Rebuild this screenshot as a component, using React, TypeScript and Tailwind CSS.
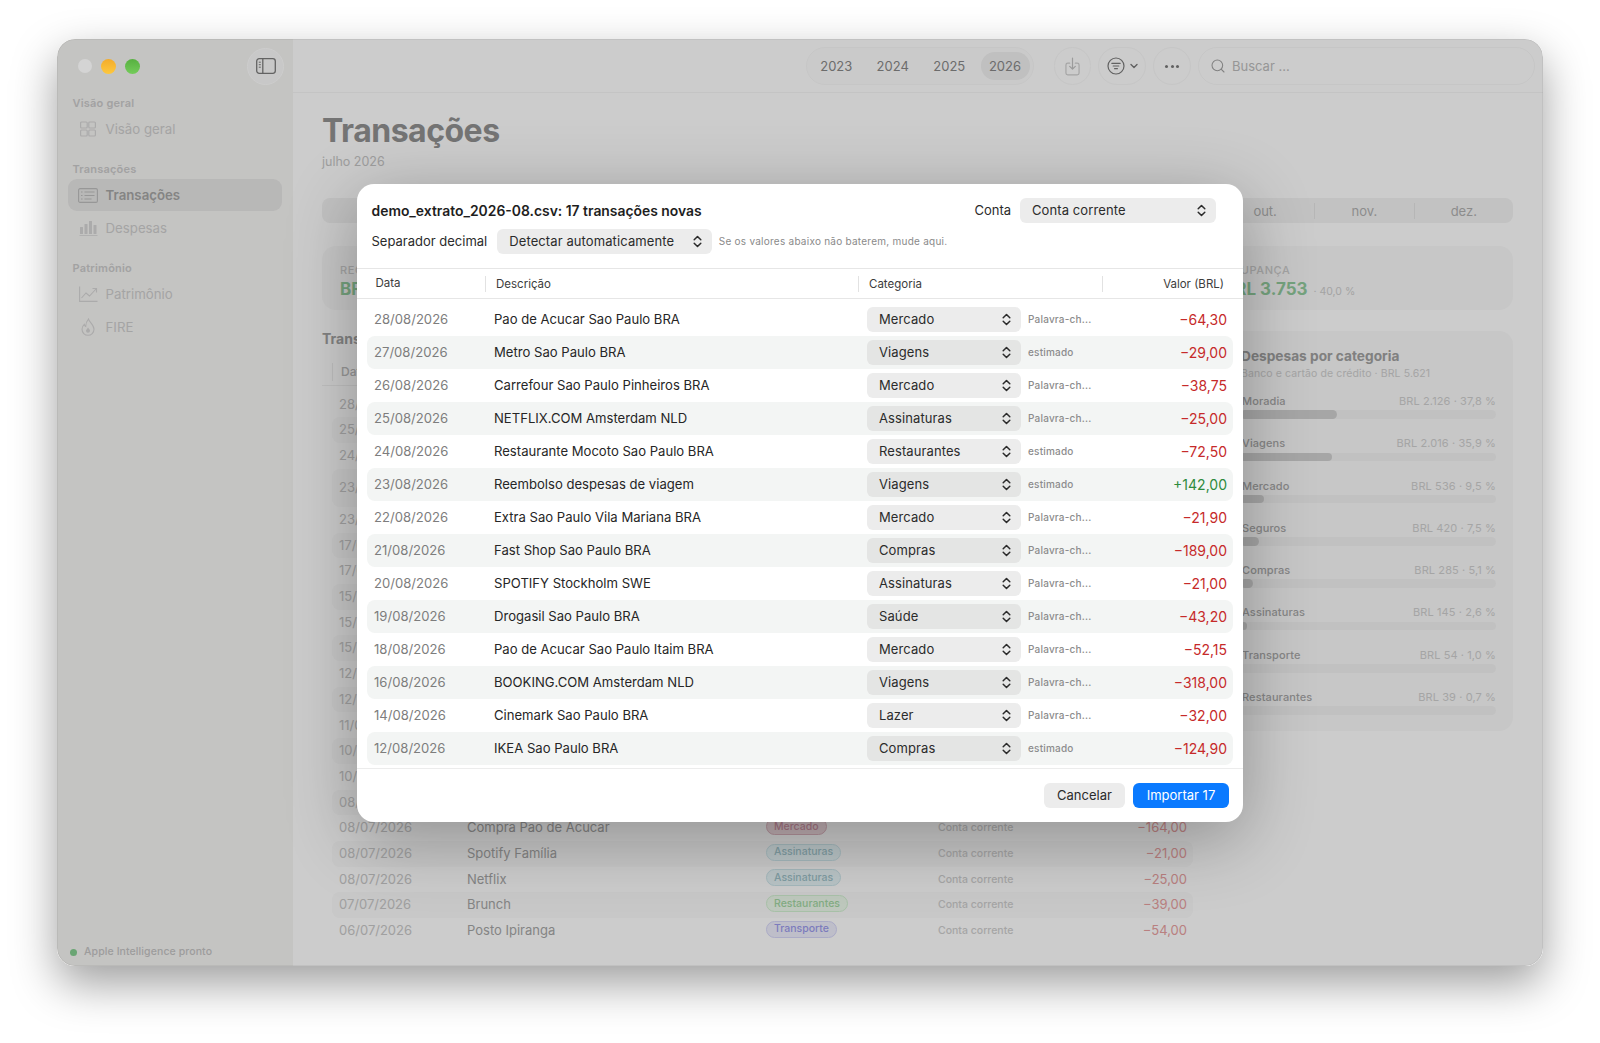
import { Search } from 'lucide-react';

const importRows = [
  { date: '28/08/2026', desc: 'Pao de Acucar Sao Paulo BRA', cat: 'Mercado', how: 'Palavra-ch...', value: '−64,30' },
  { date: '27/08/2026', desc: 'Metro Sao Paulo BRA', cat: 'Viagens', how: 'estimado', value: '−29,00' },
  { date: '26/08/2026', desc: 'Carrefour Sao Paulo Pinheiros BRA', cat: 'Mercado', how: 'Palavra-ch...', value: '−38,75' },
  { date: '25/08/2026', desc: 'NETFLIX.COM Amsterdam NLD', cat: 'Assinaturas', how: 'Palavra-ch...', value: '−25,00' },
  { date: '24/08/2026', desc: 'Restaurante Mocoto Sao Paulo BRA', cat: 'Restaurantes', how: 'estimado', value: '−72,50' },
  { date: '23/08/2026', desc: 'Reembolso despesas de viagem', cat: 'Viagens', how: 'estimado', value: '+142,00' },
  { date: '22/08/2026', desc: 'Extra Sao Paulo Vila Mariana BRA', cat: 'Mercado', how: 'Palavra-ch...', value: '−21,90' },
  { date: '21/08/2026', desc: 'Fast Shop Sao Paulo BRA', cat: 'Compras', how: 'Palavra-ch...', value: '−189,00' },
  { date: '20/08/2026', desc: 'SPOTIFY Stockholm SWE', cat: 'Assinaturas', how: 'Palavra-ch...', value: '−21,00' },
  { date: '19/08/2026', desc: 'Drogasil Sao Paulo BRA', cat: 'Saúde', how: 'Palavra-ch...', value: '−43,20' },
  { date: '18/08/2026', desc: 'Pao de Acucar Sao Paulo Itaim BRA', cat: 'Mercado', how: 'Palavra-ch...', value: '−52,15' },
  { date: '16/08/2026', desc: 'BOOKING.COM Amsterdam NLD', cat: 'Viagens', how: 'Palavra-ch...', value: '−318,00' },
  { date: '14/08/2026', desc: 'Cinemark Sao Paulo BRA', cat: 'Lazer', how: 'Palavra-ch...', value: '−32,00' },
  { date: '12/08/2026', desc: 'IKEA Sao Paulo BRA', cat: 'Compras', how: 'estimado', value: '−124,90' },
];

const hiddenDates = [
  '28/07/2026', '25/07/2026', '24/07/2026', '23/07/2026', '23/07/2026', '17/07/2026', '17/07/2026', '15/07/2026',
  '15/07/2026', '15/07/2026', '12/07/2026', '12/07/2026', '11/07/2026', '10/07/2026', '10/07/2026', '08/07/2026',
];

const badgeStyles: Record<string, string> = {
  Mercado: 'bg-[#f1dbe0] border-[#e0b8c2] text-[#d094a6]',
  Assinaturas: 'bg-[#e8f6f8] border-[#cde6ec] text-[#a0c4cb]',
  Restaurantes: 'bg-[#eefaed] border-[#d2f2d2] text-[#a4d8a4]',
  Transporte: 'bg-[#eeeefc] border-[#d6d6f8] text-[#9c9cec]',
};

const lastRows = [
  { date: '08/07/2026', desc: 'Compra Pao de Acucar', cat: 'Mercado', value: '−164,00' },
  { date: '08/07/2026', desc: 'Spotify Família', cat: 'Assinaturas', value: '−21,00' },
  { date: '08/07/2026', desc: 'Netflix', cat: 'Assinaturas', value: '−25,00' },
  { date: '07/07/2026', desc: 'Brunch', cat: 'Restaurantes', value: '−39,00' },
  { date: '06/07/2026', desc: 'Posto Ipiranga', cat: 'Transporte', value: '−54,00' },
];

const categories = [
  { name: 'Moradia', info: 'BRL 2.126 · 37,8 %', pct: 37.8 },
  { name: 'Viagens', info: 'BRL 2.016 · 35,9 %', pct: 35.9 },
  { name: 'Mercado', info: 'BRL 536 · 9,5 %', pct: 9.5 },
  { name: 'Seguros', info: 'BRL 420 · 7,5 %', pct: 7.5 },
  { name: 'Compras', info: 'BRL 285 · 5,1 %', pct: 5.1 },
  { name: 'Assinaturas', info: 'BRL 145 · 2,6 %', pct: 2.6 },
  { name: 'Transporte', info: 'BRL 54 · 1,0 %', pct: 1.0 },
  { name: 'Restaurantes', info: 'BRL 39 · 0,7 %', pct: 0.7 },
];

const months = ['jan.', 'fev.', 'mar.', 'abr.', 'mai.', 'jun.', 'jul.', 'ago.', 'set.', 'out.', 'nov.', 'dez.'];

function UpDown() {
  return (
    <svg width="9" height="13" viewBox="0 0 9 13" fill="none" stroke="#2b2b2b" strokeWidth="1.5" strokeLinecap="round" strokeLinejoin="round">
      <path d="M1.2 4.8 4.5 1.5 7.8 4.8" />
      <path d="M1.2 8.2 4.5 11.5 7.8 8.2" />
    </svg>
  );
}

function GridIcon() {
  return (
    <svg width="18" height="16" viewBox="0 0 18 16" fill="none" stroke="#d6d6d6" strokeWidth="1.2">
      <rect x="1.6" y="1" width="6.6" height="6" rx="1" />
      <rect x="9.8" y="1" width="6.6" height="6" rx="1" />
      <rect x="1.6" y="9" width="6.6" height="6" rx="1" />
      <rect x="9.8" y="9" width="6.6" height="6" rx="1" />
    </svg>
  );
}

function ListIcon() {
  return (
    <svg width="20" height="15" viewBox="0 0 20 15" fill="none" stroke="#bdbdbd" strokeWidth="1.1">
      <rect x="0.6" y="0.6" width="18.8" height="13.8" rx="1.5" />
      <path d="M3 4h1.5M3 7.5h1.5M3 11h1.5M6.5 4h10M6.5 7.5h10M6.5 11h7" />
    </svg>
  );
}

function BarsIcon() {
  return (
    <svg width="19" height="16" viewBox="0 0 19 16" fill="#d6d6d6">
      <rect x="1" y="7" width="3" height="7" rx="0.5" />
      <rect x="5.5" y="4" width="3" height="10" rx="0.5" />
      <rect x="10" y="1" width="3" height="13" rx="0.5" />
      <rect x="14.5" y="5" width="3" height="9" rx="0.5" />
      <rect x="0.5" y="15" width="18" height="0.8" />
    </svg>
  );
}

function TrendIcon() {
  return (
    <svg width="19" height="16" viewBox="0 0 19 16" fill="none" stroke="#d6d6d6" strokeWidth="1.1">
      <path d="M0.6 0.5V15.4H18.5" />
      <path d="M2.5 12 7 7l3.5 3 6.5-7" />
      <path d="M13.5 2.5h4v4" />
    </svg>
  );
}

function FlameIcon() {
  return (
    <svg width="18" height="18" viewBox="0 0 18 18" fill="none" stroke="#d6d6d6" strokeWidth="1.1">
      <path d="M9.5 1c.4 3 5.5 5.2 5.5 10.3A6 6 0 0 1 3 11.3C3 9 4.2 7.4 5.3 6.4c.2 1 .7 1.6 1.4 2C6.7 5.4 7.8 3 9.5 1z" />
      <path fill="#d6d6d6" stroke="none" d="M9 9.5c.4 1 2 1.7 2 3.3a2 2 0 0 1-4 0c0-1.2 1.5-2.1 2-3.3z" />
    </svg>
  );
}

function SidebarToggleIcon() {
  return (
    <svg width="20" height="16" viewBox="0 0 20 16" fill="none" stroke="#7c7c7c" strokeWidth="1.3">
      <rect x="0.7" y="0.7" width="18.6" height="14.6" rx="2.5" />
      <path d="M6.8 0.7v14.6" />
      <path d="M2.8 4.2h2M2.8 6.7h2M2.8 9.2h2" strokeWidth="1" />
    </svg>
  );
}

function ImportIcon() {
  return (
    <svg width="15" height="19" viewBox="0 0 16 20" fill="none" stroke="#cfcfcf" strokeWidth="1.3" strokeLinecap="round" strokeLinejoin="round">
      <path d="M5 6.5H3a2 2 0 0 0-2 2V17a2 2 0 0 0 2 2h10a2 2 0 0 0 2-2V8.5a2 2 0 0 0-2-2h-2" />
      <path d="M8 1v11.5M5 9.8l3 3 3-3" stroke="#c2c2c2" />
    </svg>
  );
}

function FilterIcon() {
  return (
    <svg width="18" height="18" viewBox="0 0 18 18" fill="none" stroke="#7a7a7a" strokeWidth="1.2" strokeLinecap="round">
      <circle cx="9" cy="9" r="8" />
      <path d="M4.8 6.3h8.4M6.2 9h5.6M7.6 11.7h2.8" />
    </svg>
  );
}

function SmallChevron() {
  return (
    <svg width="8" height="6" viewBox="0 0 8 6" fill="none" stroke="#7a7a7a" strokeWidth="1.4" strokeLinecap="round" strokeLinejoin="round">
      <path d="M1 1.5 4 4.5 7 1.5" />
    </svg>
  );
}

function SideLabel({ children }: { children: string }) {
  return <p className="mt-[17px] pl-[15.5px] text-[11px] leading-[14px] font-semibold tracking-[0.2px] text-[#cbcbcb]">{children}</p>;
}

function SideItem({ icon, label, active }: { icon: React.ReactNode; label: string; active?: boolean }) {
  return (
    <div className={`mx-[11px] flex h-[32px] items-center gap-[7.5px] rounded-[9px] pl-[10px] text-[13.25px] ${active ? 'bg-[#e6e6e5] font-semibold text-[#a6a6a6]' : 'text-[#cecece]'}`}>
      <span className="flex w-[20px] justify-center">{icon}</span>
      <span className="pt-[2px]">{label}</span>
    </div>
  );
}

function Sidebar() {
  return (
    <aside className="flex h-full w-[236px] shrink-0 flex-col bg-[#f6f5f3]">
      <div className="flex h-[54px] shrink-0 items-center justify-between pl-[21px] pr-[9px]">
        <div className="relative z-20 flex items-center gap-[9px]">
          <span className="h-[14px] w-[14px] rounded-full bg-[#d4d4d4]" />
          <span className="h-[15px] w-[15px] rounded-full bg-linear-to-b from-[#f3ac2a] to-[#fdc83e]" />
          <span className="h-[15px] w-[15px] rounded-full bg-linear-to-b from-[#57b040] to-[#74cc5a]" />
        </div>
        <button className="flex h-[37px] w-[37px] items-center justify-center rounded-full border border-white bg-[#fbfbfa]">
          <SidebarToggleIcon />
        </button>
      </div>
      <p className="mt-[3px] pl-[15.5px] text-[11px] leading-[14px] font-semibold tracking-[0.2px] text-[#cbcbcb]">Visão geral</p>
      <div className="mt-[3px]">
        <SideItem icon={<GridIcon />} label="Visão geral" />
      </div>
      <SideLabel>Transações</SideLabel>
      <div className="mt-[3px] flex flex-col gap-px">
        <SideItem icon={<ListIcon />} label="Transações" active />
        <SideItem icon={<BarsIcon />} label="Despesas" />
      </div>
      <SideLabel>Patrimônio</SideLabel>
      <div className="mt-[3px] flex flex-col gap-px">
        <SideItem icon={<TrendIcon />} label="Patrimônio" />
        <SideItem icon={<FlameIcon />} label="FIRE" />
      </div>
      <div className="mt-auto flex items-center gap-[7px] pb-[7px] pl-[13px]">
        <span className="h-[7px] w-[7px] rounded-full bg-[#85cf91]" />
        <span className="text-[10.5px] leading-[14px] font-medium tracking-[0.1px] text-[#c4c4c4]">Apple Intelligence pronto</span>
      </div>
    </aside>
  );
}

function Toolbar() {
  return (
    <header className="flex h-[54px] shrink-0 items-center border-b border-[#f6f6f6] pl-[513px] pr-[8px] pt-[1px]">
      <div className="flex h-[38px] w-[228px] items-center rounded-full border border-[#f8f8f8] bg-[#fdfdfd] pl-[1px] text-[13px] text-[#888888]">
        {['2023', '2024', '2025'].map((y) => (
          <span key={y} className="w-[56.5px] pt-[2px] text-center">{y}</span>
        ))}
        <span className="ml-[3px] flex h-[28px] w-[49px] items-center justify-center rounded-full bg-[#f0f0f0] pt-[2px]">2026</span>
      </div>
      <button className="ml-[20px] flex h-[38px] w-[37px] items-center justify-center rounded-full border border-[#f8f8f8]">
        <ImportIcon />
      </button>
      <button className="ml-[7px] flex h-[38px] w-[48px] items-center justify-center gap-[5px] rounded-full border border-[#f8f8f8]">
        <FilterIcon />
        <SmallChevron />
      </button>
      <button className="ml-[7px] flex h-[38px] w-[38px] items-center justify-center gap-[2.5px] rounded-full border border-[#f8f8f8]">
        <span className="h-[3px] w-[3px] rounded-full bg-[#7a7a7a]" />
        <span className="h-[3px] w-[3px] rounded-full bg-[#7a7a7a]" />
        <span className="h-[3px] w-[3px] rounded-full bg-[#7a7a7a]" />
      </button>
      <div className="ml-[7px] flex h-[38px] flex-1 items-center gap-[6px] rounded-full border border-[#f8f8f8] pl-[11px] text-[13px] text-[#bcbcbc]">
        <Search size={16} strokeWidth={1.6} className="text-[#a3a3a3]" />
        <span className="pt-[2px]">Buscar ...</span>
      </div>
    </header>
  );
}

function BackgroundTable() {
  return (
    <div className="w-[883px]">
      <h2 className="text-[14px] leading-[16px] font-bold text-[#a3a3a3]">Transações</h2>
      <div className="mt-[11px] flex h-[28px] items-center border-b border-[#f0f0f0] pl-[10px] text-[12px] font-medium text-[#bdbdbd]">
        <span className="border-l border-[#eeeeee] pl-[8px]">Data</span>
      </div>
      <div className="mt-[5.5px] h-[548px] overflow-hidden pl-[10px]">
        {hiddenDates.map((d, i) => (
          <div key={i} className={`flex w-[861px] items-center rounded-[8px] pl-[7px] text-[13px] text-[#c8c8c8] ${i === 3 ? 'h-[38.4px]' : 'h-[25.7px]'} ${i % 2 === 1 ? 'bg-[#fafafa]' : ''}`}>
            {d}
          </div>
        ))}
        {lastRows.map((r, i) => (
          <div key={i} className={`flex h-[25.7px] w-[861px] items-center rounded-[8px] pl-[7px] pr-[6px] text-[13px] ${i % 2 === 1 ? 'bg-[#fafafa]' : ''}`}>
            <span className="w-[128px] text-[#c8c8c8]">{r.date}</span>
            <span className="w-[299px] text-[#a6a6a6]">{r.desc}</span>
            <span className="-mt-[3px] flex w-[172px]">
              <span className={`inline-flex h-[17px] items-center rounded-full border px-[7px] text-[10.5px] font-medium ${badgeStyles[r.cat]}`}>{r.cat}</span>
            </span>
            <span className="text-[10.5px] font-medium text-[#cfcfcf]">Conta corrente</span>
            <span className="flex-1 text-right text-[#e8a0a0]">{r.value}</span>
          </div>
        ))}
      </div>
    </div>
  );
}

function CategoryCard() {
  return (
    <section className="h-[400px] w-[289px] rounded-[14px] bg-[#f9f9f9] pl-[17px] pr-[17px] pt-[16px]">
      <h3 className="text-[13.7px] leading-[18px] font-bold text-[#a0a0a0]">Despesas por categoria</h3>
      <p className="mt-[2px] text-[10.5px] leading-[14px] tracking-[0.1px] text-[#cecece]">Banco e cartão de crédito · BRL 5.621</p>
      <div className="mt-[13px] -ml-[1px]">
        {categories.map((c) => (
          <div key={c.name} className="h-[42.3px]">
            <div className="flex justify-between text-[11px] leading-[14px] tracking-[0.1px]">
              <span className="pl-[2px] font-medium text-[#a8a8a8]">{c.name}</span>
              <span className="text-[#cfcfcf]">{c.info}</span>
            </div>
            <div className="mt-[2.3px] h-[8.5px] w-[256px] overflow-hidden rounded-full bg-[#f2f2f2]">
              <div className="h-full rounded-full bg-[#d0d0d0]" style={{ width: `${c.pct}%` }} />
            </div>
          </div>
        ))}
      </div>
    </section>
  );
}

function Background() {
  return (
    <main className="flex h-full flex-1 flex-col bg-white">
      <Toolbar />
      <div className="pl-[29px] pr-[30px]">
        <h1 className="mt-[19px] text-[32px] leading-[38px] font-bold tracking-[-0.5px] text-[#929292]">Transações</h1>
        <p className="mt-[4px] text-[12.5px] leading-[16px] text-[#c6c6c6]">julho 2026</p>
        <div className="mt-[28px] flex h-[25px] items-center rounded-[8px] bg-[#f3f3f3] text-[13px] text-[#b0b0b0]">
          {months.map((m, i) => (
            <span key={m} className={`h-[16px] flex-1 text-center leading-[16px] ${i > 0 ? 'border-l border-[#e4e4e4]' : ''}`}>{m}</span>
          ))}
        </div>
        <div className="mt-[23px] flex h-[64px] gap-[14px]">
          <div className="flex-1 rounded-[14px] bg-[#f9f9f9] pl-[18px] pt-[17px]">
            <p className="text-[11px] leading-[14px] font-medium tracking-[0.6px] text-[#cdcdcd]">RECEITAS</p>
            <p className="mt-[1px] text-[17px] leading-[22px] font-bold text-[#93cc9e]">BRL 9.374</p>
          </div>
          <div className="w-[307px] rounded-[14px] bg-[#f9f9f9] pl-[18px] pt-[17px]">
            <p className="text-[11px] leading-[14px] font-medium tracking-[0.6px] text-[#cdcdcd]">POUPANÇA</p>
            <p className="mt-[1px] flex items-baseline gap-[6px]">
              <span className="text-[17px] leading-[22px] font-bold text-[#93cc9e]">BRL 3.753</span>
              <span className="text-[10.5px] text-[#cdcdcd]">· 40,0 %</span>
            </p>
          </div>
        </div>
        <div className="mt-[21px] flex justify-between">
          <BackgroundTable />
          <CategoryCard />
        </div>
      </div>
    </main>
  );
}

function SelectBox({ label, className, hover }: { label: string; className: string; hover?: boolean }) {
  return (
    <div className={`flex h-[25px] items-center justify-between rounded-[6px] pl-[12px] pr-[10px] text-[13px] tracking-[0.1px] text-[#2b2b2b] ${hover ? 'bg-[#e4e5e4]' : 'bg-[#ececec]'} ${className}`}>
      <span className="pt-[1px]">{label}</span>
      <UpDown />
    </div>
  );
}

function ImportDialog() {
  return (
    <div className="absolute left-[300px] top-[145px] z-30 flex h-[638px] w-[886px] flex-col overflow-hidden rounded-[17px] bg-white text-[#2b2b2b] shadow-[0_16px_70px_rgba(0,0,0,0.3)]">
      <div className="flex items-center justify-between pl-[14.5px] pr-[27px] pt-[14px]">
        <h2 className="pt-[2px] text-[13.9px] font-semibold text-[#1e1e1e]">demo_extrato_2026-08.csv: 17 transações novas</h2>
        <div className="flex items-center gap-[9px] text-[13px]">
          Conta
          <SelectBox label="Conta corrente" className="w-[196px]" />
        </div>
      </div>
      <div className="mt-[6px] flex items-center pl-[14.5px]">
        <span className="text-[13px]">Separador decimal</span>
        <SelectBox label="Detectar automaticamente" className="ml-[10px] w-[215px]" />
        <span className="ml-[6.5px] text-[10px] tracking-[0.25px] text-[#8a8a8a]">Se os valores abaixo não baterem, mude aqui.</span>
      </div>
      <div className="mt-[14px] flex h-[31px] shrink-0 items-center border-y border-[#e6e6e6] text-[11.5px] text-[#3c3c3c]">
        <span className="w-[128px] pl-[18.5px]">Data</span>
        <span className="h-[16px] w-[373px] border-l border-[#e2e2e2] pl-[10px] leading-[16px]">Descrição</span>
        <span className="h-[16px] w-[244px] border-l border-[#e2e2e2] pl-[10px] leading-[16px]">Categoria</span>
        <span className="h-[16px] flex-1 border-l border-[#e2e2e2] pr-[19px] text-right leading-[16px]">Valor (BRL)</span>
      </div>
      <div className="flex-1 overflow-hidden px-[10px] pt-[4px]">
        {importRows.map((r, i) => (
          <div key={r.date} className={`flex h-[33px] items-center rounded-[8px] pl-[7px] pr-[6px] text-[13.1px] ${i % 2 === 1 ? 'bg-[#f3f5f4]' : ''}`}>
            <span className="w-[120px] pt-[1px] text-[#7d7d7d]">{r.date}</span>
            <span className="w-[373px] pt-[1px] text-[#262626]">{r.desc}</span>
            <SelectBox label={r.cat} className="w-[154px]" hover={i % 2 === 1} />
            <span className="ml-[7px] text-[10px] font-medium tracking-[0.2px] text-[#8c8c8c]">{r.how}</span>
            <span className={`flex-1 text-right text-[14px] ${r.value.startsWith('+') ? 'text-[#2e8b3d]' : 'text-[#c62a2a]'}`}>{r.value}</span>
          </div>
        ))}
      </div>
      <div className="flex h-[54px] shrink-0 justify-end gap-[8px] border-t border-[#ececec] pr-[14px] pt-[14px] text-[13px]">
        <button className="h-[25px] w-[81px] rounded-[6px] bg-[#ececec] pt-[1px] text-[#2b2b2b]">Cancelar</button>
        <button className="h-[25px] w-[96px] rounded-[6px] bg-[#0a7aff] pt-[1px] text-white">Importar 17</button>
      </div>
    </div>
  );
}

export default function App() {
  return (
    <div className="h-[1043px] overflow-hidden bg-white pl-[57px] pt-[39px] font-[Inter,sans-serif]">
      <div className="relative flex h-[927px] w-[1486px] overflow-hidden rounded-[18px] shadow-[0_18px_45px_rgba(0,0,0,0.38)]">
        <Sidebar />
        <Background />
        <div className="absolute inset-0 z-10 rounded-[18px] bg-black/20 ring-1 ring-inset ring-black/5" />
        <ImportDialog />
      </div>
    </div>
  );
}
